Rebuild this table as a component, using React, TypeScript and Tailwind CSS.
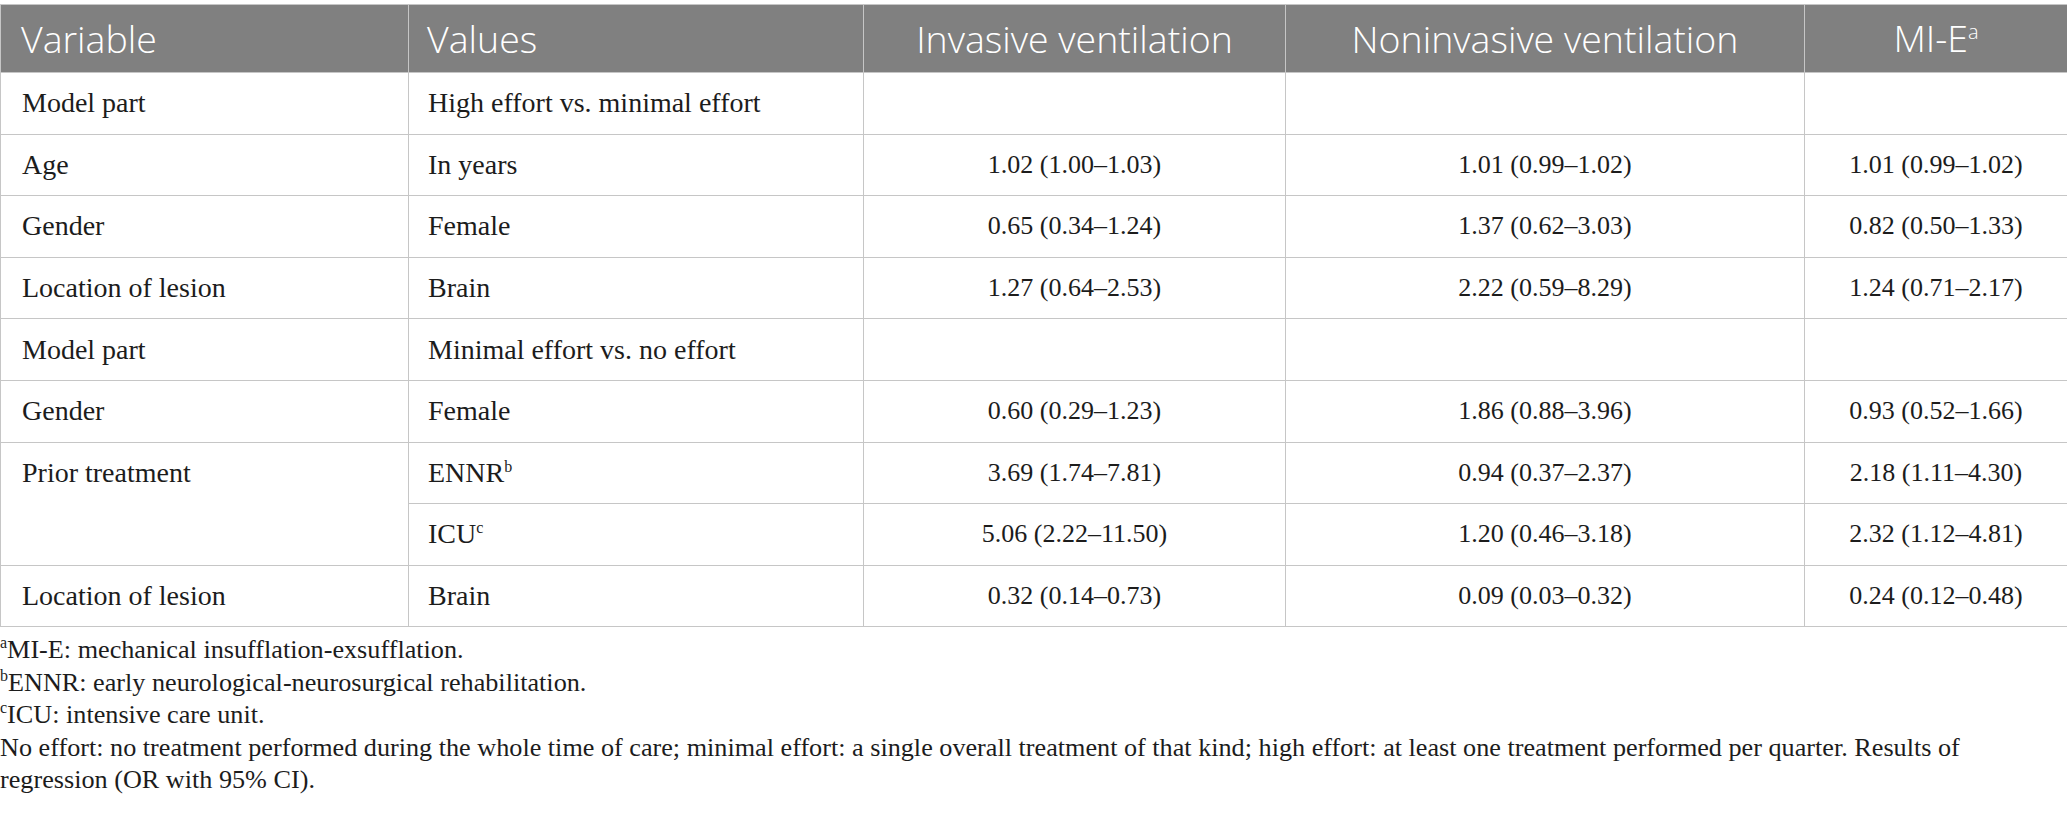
import React from "react";

type Row = {
  variable?: string;
  rowSpan?: number;
  value: React.ReactNode;
  inv: string;
  nonInv: string;
  mie: string;
};

const Sup = ({ c }: { c: string }) => (
  <span className="text-[16px] relative -top-[10px] leading-none">{c}</span>
);

const rows: Row[] = [
  { variable: "Model part", value: "High effort vs. minimal effort", inv: "", nonInv: "", mie: "" },
  { variable: "Age", value: "In years", inv: "1.02 (1.00–1.03)", nonInv: "1.01 (0.99–1.02)", mie: "1.01 (0.99–1.02)" },
  { variable: "Gender", value: "Female", inv: "0.65 (0.34–1.24)", nonInv: "1.37 (0.62–3.03)", mie: "0.82 (0.50–1.33)" },
  { variable: "Location of lesion", value: "Brain", inv: "1.27 (0.64–2.53)", nonInv: "2.22 (0.59–8.29)", mie: "1.24 (0.71–2.17)" },
  { variable: "Model part", value: "Minimal effort vs. no effort", inv: "", nonInv: "", mie: "" },
  { variable: "Gender", value: "Female", inv: "0.60 (0.29–1.23)", nonInv: "1.86 (0.88–3.96)", mie: "0.93 (0.52–1.66)" },
  {
    variable: "Prior treatment",
    rowSpan: 2,
    value: (
      <>
        ENNR<Sup c="b" />
      </>
    ),
    inv: "3.69 (1.74–7.81)",
    nonInv: "0.94 (0.37–2.37)",
    mie: "2.18 (1.11–4.30)",
  },
  {
    value: (
      <>
        ICU<Sup c="c" />
      </>
    ),
    inv: "5.06 (2.22–11.50)",
    nonInv: "1.20 (0.46–3.18)",
    mie: "2.32 (1.12–4.81)",
  },
  { variable: "Location of lesion", value: "Brain", inv: "0.32 (0.14–0.73)", nonInv: "0.09 (0.03–0.32)", mie: "0.24 (0.12–0.48)" },
];

const td = "border border-[#c6c6c6] h-[61.6px] align-middle";
const num = "text-center text-[26px]";

export default function App() {
  return (
    <div className="bg-white w-[2067px] pt-[4px] text-[#1c1c1c]" style={{ fontFamily: '"Liberation Serif", serif' }}>
      <table className="table-fixed border-collapse w-[2067px] text-[28px] leading-[30px]">
        <colgroup>
          <col className="w-[408px]" />
          <col className="w-[455px]" />
          <col className="w-[422px]" />
          <col className="w-[519px]" />
          <col className="w-[263px]" />
        </colgroup>
        <thead>
          <tr className="bg-[#808080] text-white text-[37.5px] font-light" style={{ fontFamily: '"Open Sans", sans-serif' }}>
            <th className="border border-[#c6c6c6] h-[68px] text-left font-light pl-[20px]">Variable</th>
            <th className="border border-[#c6c6c6] text-left font-light pl-[18px]">Values</th>
            <th className="border border-[#c6c6c6] text-center font-light">Invasive ventilation</th>
            <th className="border border-[#c6c6c6] text-center font-light">Noninvasive ventilation</th>
            <th className="border border-[#c6c6c6] text-center font-light">
              MI-E<span className="text-[20px] relative -top-[13px] leading-none">a</span>
            </th>
          </tr>
        </thead>
        <tbody>
          {rows.map((r, i) => (
            <tr key={i}>
              {r.variable !== undefined && (
                <td rowSpan={r.rowSpan} className={`${td} pl-[21px] ${r.rowSpan ? "align-top pt-[15px]" : ""}`}>
                  {r.variable}
                </td>
              )}
              <td className={`${td} pl-[19px]`}>{r.value}</td>
              <td className={`${td} ${num}`}>{r.inv}</td>
              <td className={`${td} ${num}`}>{r.nonInv}</td>
              <td className={`${td} ${num}`}>{r.mie}</td>
            </tr>
          ))}
        </tbody>
      </table>
      <div className="mt-[7px] text-[26.2px] leading-[32.5px]">
        <p>
          <Sup c="a" />MI-E: mechanical insufflation-exsufflation.
        </p>
        <p>
          <Sup c="b" />ENNR: early neurological-neurosurgical rehabilitation.
        </p>
        <p>
          <Sup c="c" />ICU: intensive care unit.
        </p>
        <p>
          No effort: no treatment performed during the whole time of care; minimal effort: a single overall treatment of that kind; high effort: at least one treatment performed per quarter. Results of regression (OR with 95% CI).
        </p>
      </div>
    </div>
  );
}
